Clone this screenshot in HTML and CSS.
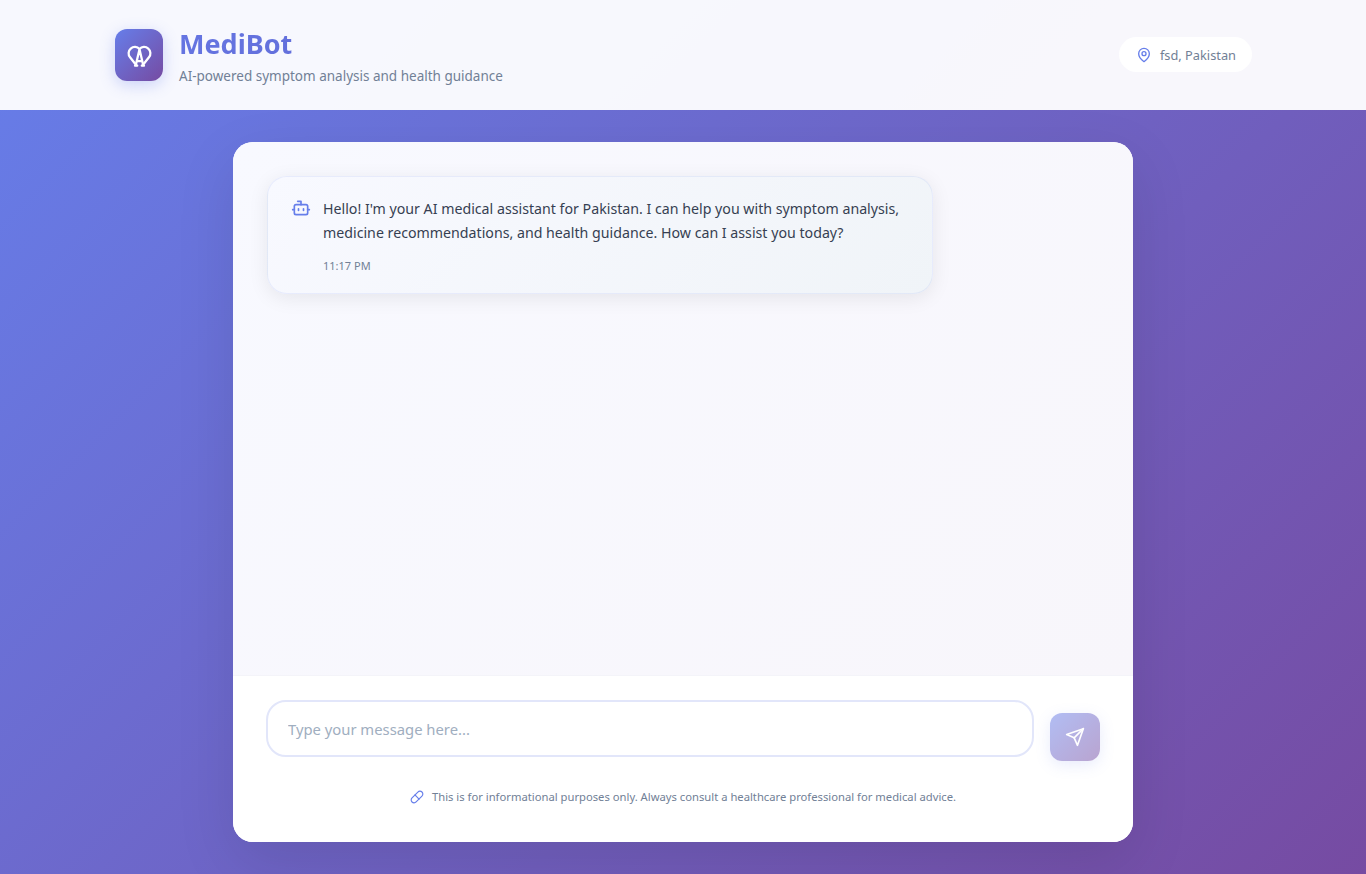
FILE: index.html
```html
<!DOCTYPE html>
<html lang="en">
<head>
  <meta charset="UTF-8">
  <title>MediBot</title>
  <link rel="stylesheet" href="styles.css">
</head>
<body>
<header class="cabecera">
  <div class="cabecera-interior">
    <div class="marca">
      <div class="logo">
        <svg width="27" height="27" viewBox="0 0 24 24" fill="none" stroke="currentColor" stroke-width="2" stroke-linecap="round" stroke-linejoin="round">
          <path d="M9 20.5 3.6 13.6a5.6 5.6 0 0 1 8.4-7.4 5.6 5.6 0 0 1 8.4 7.4L15 20.5"/>
          <path d="M12 6.5 8.6 21M12 6.5 15.4 21M9.5 17h5M8 21h2M14 21h2"/>
        </svg>
      </div>
      <div class="marca-texto">
        <h1 class="titulo">MediBot</h1>
        <p class="subtitulo">AI-powered symptom analysis and health guidance</p>
      </div>
    </div>
    <div class="ubicacion">
      <svg class="icono-azul" width="16" height="16" viewBox="0 0 24 24" fill="none" stroke="currentColor" stroke-width="2" stroke-linecap="round" stroke-linejoin="round">
        <path d="M20 10c0 6-8 12-8 12s-8-6-8-12a8 8 0 0 1 16 0Z"/>
        <circle cx="12" cy="10" r="3"/>
      </svg>
      <span>fsd, Pakistan</span>
    </div>
  </div>
</header>

<main class="principal">
  <section class="chat">
    <div class="mensajes">
      <div class="burbuja">
        <svg class="icono-azul icono-bot" width="20" height="20" viewBox="0 0 24 24" fill="none" stroke="currentColor" stroke-width="2" stroke-linecap="round" stroke-linejoin="round">
          <path d="M12 8V4H8"/>
          <rect x="4" y="8" width="16" height="12" rx="2"/>
          <path d="M2 14h2M20 14h2M15 13v2M9 13v2"/>
        </svg>
        <div>
          <p class="texto">Hello! I'm your AI medical assistant for Pakistan. I can help you with symptom analysis, medicine recommendations, and health guidance. How can I assist you today?</p>
          <span class="hora">11:17 PM</span>
        </div>
      </div>
    </div>
    <div class="entrada">
      <div class="fila-entrada">
        <div class="caja-texto">
          <input class="campo" type="text" placeholder="Type your message here...">
        </div>
        <button class="enviar" disabled>
          <svg width="20" height="20" viewBox="0 0 24 24" fill="none" stroke="currentColor" stroke-width="2" stroke-linecap="round" stroke-linejoin="round">
            <path d="m22 2-7 20-4-9-9-4Z"/>
            <path d="M22 2 11 13"/>
          </svg>
        </button>
      </div>
      <p class="aviso">
        <svg class="icono-azul" width="14" height="14" viewBox="0 0 24 24" fill="none" stroke="currentColor" stroke-width="2" stroke-linecap="round" stroke-linejoin="round">
          <path d="m10.5 20.5 10-10a4.95 4.95 0 1 0-7-7l-10 10a4.95 4.95 0 1 0 7 7Z"/>
          <path d="m8.5 8.5 7 7"/>
        </svg>
        <span>This is for informational purposes only. Always consult a healthcare professional for medical advice.</span>
      </p>
    </div>
  </section>
</main>
</body>
</html>
```

FILE: styles.css
```css
* {
  box-sizing: border-box;
}

body {
  font-family: "Noto Sans", "Open Sans", sans-serif;
  margin: 0;
  height: 874px;
  overflow: hidden;
  background: linear-gradient(135deg, #667eea 0%, #764ba2 100%);
  display: flex;
  flex-direction: column;
}

.icono-azul {
  color: #667eea;
  flex-shrink: 0;
}

.cabecera {
  height: 110px;
  background: rgba(255, 255, 255, 0.95);
  flex-shrink: 0;
}

.cabecera-interior {
  max-width: 1200px;
  height: 100%;
  margin: 0 auto;
  padding: 0 31px 2px 32px;
  display: flex;
  justify-content: space-between;
  align-items: center;
}

.marca {
  display: flex;
  align-items: center;
  gap: 16px;
  margin-top: 2px;
}

.marca-texto {
  padding-top: 2px;
}

.logo {
  width: 48px;
  height: 52px;
  border-radius: 12px;
  background: linear-gradient(135deg, #667eea, #764ba2);
  box-shadow: 0 4px 15px rgba(102, 126, 234, 0.3);
  color: #fff;
  display: flex;
  align-items: center;
  justify-content: center;
}

.titulo {
  margin: 0;
  font-size: 27px;
  line-height: 36px;
  font-weight: 700;
  background: linear-gradient(135deg, #6575e2, #6068d2);
  -webkit-background-clip: text;
  background-clip: text;
  color: transparent;
}

.subtitulo {
  margin: 4px 0 0;
  font-size: 13.5px;
  line-height: 20px;
  color: #718096;
}

.ubicacion {
  display: flex;
  align-items: center;
  gap: 8px;
  padding: 1px 16px 0 17px;
  height: 35px;
  border-radius: 20px;
  background: #fff;
  font-size: 12.8px;
  color: #718096;
}

.principal {
  flex: 1;
  padding: 32px 0;
  display: flex;
  justify-content: center;
}

.chat {
  width: 900px;
  height: 700px;
  background: #fff;
  border-radius: 20px;
  overflow: hidden;
  display: flex;
  flex-direction: column;
  box-shadow: 0 20px 60px rgba(0, 0, 0, 0.1);
}

.mensajes {
  flex: 1;
  padding: 34px 34px;
  background: linear-gradient(135deg, #f8f9ff, #f8f6fb);
}

.burbuja {
  width: 666px;
  height: 118px;
  padding: 20px 24px 20px 23px;
  display: flex;
  gap: 12px;
  border: 1px solid rgba(102, 126, 234, 0.1);
  border-radius: 20px;
  background: linear-gradient(135deg, #f8f9ff, #f0f4f8);
  box-shadow: 0 4px 20px rgba(0, 0, 0, 0.08);
}

.icono-bot {
  margin-top: 1px;
}

.texto {
  margin: 0;
  font-size: 14.2px;
  line-height: 24px;
  color: #363f52;
}

.hora {
  display: block;
  margin-top: 13px;
  font-size: 11px;
  line-height: 16px;
  color: #718096;
}

.entrada {
  height: 167px;
  padding: 24px 33px 0;
  background: #fff;
  border-top: 1px solid #f4f4f9;
}

.fila-entrada {
  display: flex;
  align-items: flex-end;
  gap: 16px;
}

.caja-texto {
  flex: 1;
  padding-bottom: 4px;
}

.campo {
  display: block;
  width: 100%;
  height: 57px;
  padding: 0 20px;
  border: 2px solid #e2e6fa;
  border-radius: 20px;
  font-family: inherit;
  font-size: 14.8px;
  background: #fff;
}

.campo::placeholder {
  color: #a0aec0;
}

.enviar {
  width: 50px;
  height: 48px;
  border: none;
  border-radius: 12px;
  background: linear-gradient(135deg, #667eea, #764ba2);
  opacity: 0.5;
  color: #fff;
  display: flex;
  align-items: center;
  justify-content: center;
  box-shadow: 0 4px 15px rgba(102, 126, 234, 0.3);
}

.aviso {
  margin: 28px 0 0;
  display: flex;
  justify-content: center;
  align-items: center;
  gap: 8px;
  font-size: 11.24px;
  line-height: 16px;
  color: #718096;
}
```
